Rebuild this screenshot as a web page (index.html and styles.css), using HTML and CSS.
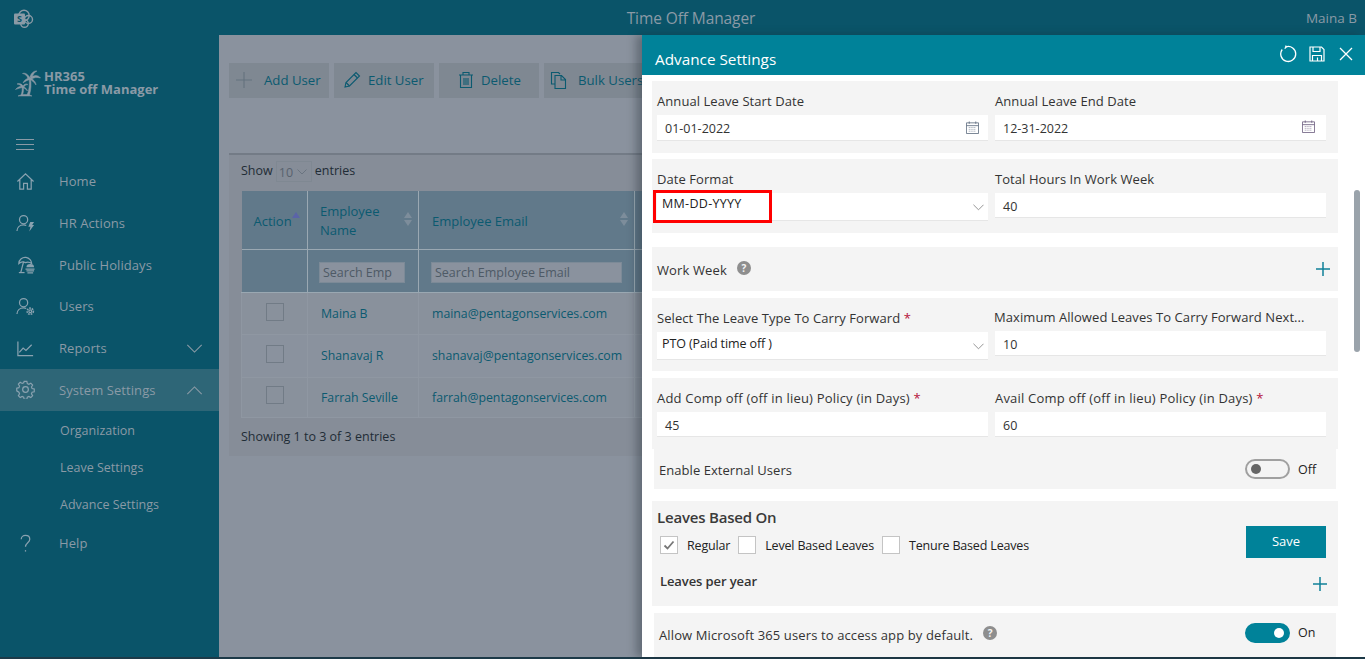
FILE: index.html
```html
<!DOCTYPE html>
<html lang="en">
<head>
<meta charset="utf-8">
<title>Time Off Manager</title>
<link rel="stylesheet" href="styles.css">
</head>
<body>
<header class="topbar">
  <svg class="sp-logo" viewBox="0 0 20 20" width="20" height="20"><circle cx="10" cy="6.500" r="5.200" fill="none" stroke="#8a9aa6" stroke-width="1.400"/><circle cx="14.500" cy="10.500" r="4" fill="none" stroke="#8a9aa6" stroke-width="1.400"/><circle cx="10.500" cy="14.500" r="3.800" fill="none" stroke="#8a9aa6" stroke-width="1.400"/><rect x="0" y="4.500" width="11" height="11" rx="1" fill="#8a9aa6"/><text x="5.500" y="13.200" class="sp-s">S</text></svg>
  <div class="top-title">Time Off Manager</div>
  <div class="top-user">Maina B</div>
</header>
<div class="app">
  <aside class="sidebar">
    <div class="brand">
      <svg class="palm" viewBox="0 0 26 28" width="26" height="28"><g fill="#8a9aa6" stroke="#8a9aa6" stroke-width=".5"><path d="M14 9C15 15 14 22 12 26L14.500 26C16 21 16.500 15 15.500 9Z"/><path d="M15 9C13 5 10 3.500 7.500 4.500 10 4.800 12 6.500 13 9.500Z"/><path d="M15 8C16 4 19 1.500 22 2 19.500 3 18 5.500 17 8Z"/><path d="M15 9C19 5.500 23.500 6 25.500 9 22 8 19 8.500 16.500 10Z"/><path d="M15 9C18 10 21 13 21 16 19 13 17 11.500 15 10.500Z"/><path d="M15 9C12 9 9 11 8 14 10.500 12 13 11 15 10.500Z"/><path d="M7 17.500C7.500 20 7 24 6 26L7.500 26C8.500 23.500 8.800 20 8.200 17.500Z"/><path d="M8 17C6.500 14.500 4 14 2 15 4.500 15.300 6 16.500 7 18Z"/><path d="M8 17C9 15 11.500 14.300 13 15.500 11 15.700 9.500 16.800 8.500 18Z"/><path d="M7.500 17C5 17 2 18.500 0.500 20.500 3 19.500 5.500 18.800 7.500 18.500Z"/><path d="M8 17.500C10 18 12 20 12.500 22 11 20.300 9.500 19 7.500 18.500Z"/><path d="M3 27C7 25 13 25 17 27Z"/></g></svg>
      <div class="brand-text"><div>HR365</div><div>Time off Manager</div></div>
    </div>
    <div class="burger"><span></span><span></span><span></span></div>
    <nav class="nav">
      <a class="nav-item"><svg class="nav-ic" viewBox="0 0 20 20"><path d="M1.500 10 10 2l8.500 8M4 8v10h4v-6h4v6h4V8"/></svg><span>Home</span></a>
      <a class="nav-item"><svg class="nav-ic" viewBox="0 0 20 20"><circle cx="8" cy="6" r="4.300"/><path d="M1 18c0-4 3-6.500 7-6.500 1.200 0 2 .2 2.800.6"/><path class="fillic" d="M15 8.500h4l-2 3h2l-5 7 1.200-5H13Z"/></svg><span>HR Actions</span></a>
      <a class="nav-item"><svg class="nav-ic" viewBox="0 0 20 20"><path d="M3 9C3 4.500 7 2 10.500 2.500 14 3 16.500 6 16.500 9 14 7 12 7 10 8 8 7 5 7 3 9Z"/><path d="M8 7 5 18.500"/><path d="M3 18.500h6"/><path class="fillic" d="M11 13a4 3.500 0 0 1 8 0Z"/><path d="M10 14.800h9.500M11 16.800h8M12 18.800h6"/></svg><span>Public Holidays</span></a>
      <a class="nav-item"><svg class="nav-ic" viewBox="0 0 20 20"><circle cx="8" cy="6" r="4.300"/><path d="M1 18c0-4 3-6.500 7-6.500 1.200 0 2 .2 2.800.6"/><circle cx="15" cy="15" r="1.500"/><circle cx="15" cy="15" r="3.300" stroke-dasharray="1.800 1" stroke-width="1.600"/></svg><span>Users</span></a>
      <a class="nav-item has-caret"><svg class="nav-ic" viewBox="0 0 20 20"><path d="M2 2.500v15h16"/><path d="M3.500 14 7.500 9.500l3 2.500 6-6"/></svg><span>Reports</span><svg class="caret" viewBox="0 0 18 10"><path d="M1 1l8 8 8-8"/></svg></a>
      <a class="nav-item has-caret active"><svg class="nav-ic" viewBox="0 0 20 20"><circle cx="10" cy="10" r="3"/><path d="M8.500 1h3l.5 2.500 1.700.8 2.200-1.300 2 2.100-1.300 2.200.7 1.700 2.400.5v3l-2.400.5-.7 1.700 1.300 2.200-2 2.100-2.200-1.300-1.700.8-.5 2.400h-3l-.5-2.400-1.700-.8-2.200 1.300-2-2.100 1.300-2.200-.7-1.700L.3 11.500v-3l2.400-.5.7-1.700L2.100 4.100l2-2.100 2.200 1.300 1.700-.8Z" transform="translate(.5 .5) scale(.95)"/></svg><span>System Settings</span><svg class="caret" viewBox="0 0 18 10"><path d="M1 9l8-8 8 8"/></svg></a>
      <div class="subnav">
        <a class="sub-item">Organization</a>
        <a class="sub-item">Leave Settings</a>
        <a class="sub-item">Advance Settings</a>
      </div>
      <a class="nav-item"><svg class="nav-ic" viewBox="0 0 20 20"><path d="M5.500 5.500C5.500 3 7.500 1.500 10 1.500s4.500 1.600 4.500 4c0 3.500-4.500 4-4.500 8"/><path d="M10 17v1.500"/></svg><span>Help</span></a>
    </nav>
  </aside>
  <main class="main">
    <div class="toolbar">
      <button class="tool tool-add"><svg class="tool-ic" viewBox="0 0 18 18"><path d="M9 1v16M1 9h16"/></svg><span>Add User</span></button>
      <button class="tool tool-edit"><svg class="tool-ic" viewBox="0 0 18 18"><path d="M2 16l1-4.500L13 1.500l3.500 3.500L6.500 15Z"/><path d="M11 3.500 14.500 7M3 11.500 6.500 15"/></svg><span>Edit User</span></button>
      <button class="tool tool-del"><svg class="tool-ic" viewBox="0 0 18 18"><path d="M2 4h14M6 4V1.500h6V4M3.500 4v12.500h11V4M7 7v7M9 7v7M11 7v7"/></svg><span>Delete</span></button>
      <button class="tool tool-bulk"><svg class="tool-ic" viewBox="0 0 18 18"><path d="M5 13H1.500V1.500h7L10 3"/><path d="M5 4.500h6.500l4 4v9H5ZM11 4.500V9h4.500"/></svg><span>Bulk Users</span></button>
    </div>
    <section class="card">
      <div class="show-line">Show <span class="len-select">10<svg viewBox="0 0 10 6" width="10" height="6"><path d="M.5.500 5 5 9.500.5"/></svg></span> entries</div>
      <table class="grid">
        <thead>
          <tr class="head-row">
            <th class="c-action">Action<i class="sort-up"></i></th>
            <th class="c-name"><span class="th-two">Employee Name</span><i class="sort"></i></th>
            <th class="c-email">Employee Email<i class="sort"></i></th>
            <th class="c-rest"></th>
          </tr>
          <tr class="filter-row">
            <th></th>
            <th><span class="search s-name">Search Emp</span></th>
            <th><span class="search s-email">Search Employee Email</span></th>
            <th></th>
          </tr>
        </thead>
        <tbody>
          <tr class="r1"><td class="cb-cell"><span class="cb"></span></td><td>Maina B</td><td>maina@pentagonservices.com</td><td></td></tr>
          <tr class="r2"><td class="cb-cell"><span class="cb"></span></td><td>Shanavaj R</td><td>shanavaj@pentagonservices.com</td><td></td></tr>
          <tr class="r3"><td class="cb-cell"><span class="cb"></span></td><td>Farrah Seville</td><td>farrah@pentagonservices.com</td><td></td></tr>
        </tbody>
      </table>
      <div class="info">Showing 1 to 3 of 3 entries</div>
    </section>
  </main>
</div>
<div class="bottom-line"></div>

<aside class="panel">
  <div class="panel-head">
    <div class="panel-title">Advance Settings</div>
    <svg class="ph-ic ph-reset" viewBox="0 0 18 18"><path d="M7 1.800A7.500 7.500 0 1 1 3.200 4.500"/><path d="M6.500 .6 7.200 2 5.700 3.600"/></svg>
    <svg class="ph-ic ph-save" viewBox="0 0 18 18"><path d="M2 2h11.500L16 4.500V16H2Z"/><path d="M5 2v4.500h7V2M4.500 16v-5.500h9V16M9.500 12.500V16"/></svg>
    <svg class="ph-ic ph-close" viewBox="0 0 18 18"><path d="M3 3l12 12M15 3 3 15"/></svg>
  </div>
  <div class="panel-body">
    <div class="frow r-dates">
      <div class="fld"><label>Annual Leave Start Date</label><div class="inp tall">01-01-2022<svg class="cal" viewBox="0 0 14 14"><path d="M.5 2h13v11.500H.5ZM.5 5h13M3.500.5V3M10.500.5V3"/><path class="cal-dots" d="M3 7h8M3 9h8M3 11h8"/></svg></div></div>
      <div class="fld"><label>Annual Leave End Date</label><div class="inp tall">12-31-2022<svg class="cal cal-b" viewBox="0 0 14 14"><path d="M.5 2h13v11.500H.5ZM.5 5h13M3.500.5V3M10.500.5V3"/><path class="cal-dots" d="M3 7h8M3 9h8M3 11h8"/></svg></div></div>
    </div>
    <div class="frow r-format">
      <div class="fld"><label>Date Format</label><div class="sel sel-high"><span class="sel-txt sel-date">MM-DD-YYYY</span><svg class="chev" viewBox="0 0 12 7"><path d="M.5.500 6 6 11.500.5"/></svg><span class="redbox"></span></div></div>
      <div class="fld"><label>Total Hours In Work Week</label><div class="inp">40</div></div>
    </div>
    <div class="frow-line r-week">
      <span class="plain-label">Work Week</span><span class="help-dot">?</span>
      <svg class="plus" viewBox="0 0 14 14"><path d="M7 0v14M0 7h14"/></svg>
    </div>
    <div class="frow r-carry">
      <div class="fld"><label>Select The Leave Type To Carry Forward <b>*</b></label><div class="sel"><span class="sel-txt">PTO (Paid time off )</span><svg class="chev" viewBox="0 0 12 7"><path d="M.5.500 6 6 11.500.5"/></svg></div></div>
      <div class="fld fld-up"><label>Maximum Allowed Leaves To Carry Forward Next...</label><div class="inp">10</div></div>
    </div>
    <div class="frow r-comp">
      <div class="fld"><label>Add Comp off (off in lieu) Policy (in Days) <b>*</b></label><div class="inp">45</div></div>
      <div class="fld"><label>Avail Comp off (off in lieu) Policy (in Days) <b>*</b></label><div class="inp">60</div></div>
    </div>
    <div class="tog-row r-ext">
      <span class="plain-label">Enable External Users</span>
      <span class="toggle"></span><span class="tog-txt">Off</span>
    </div>
    <div class="leaves">
      <div class="leaves-top">
        <div class="leaves-left">
          <div class="leaves-title">Leaves Based On</div>
          <div class="checks">
            <span class="chk"><svg viewBox="0 0 12 10" width="12" height="10"><path d="M1.500 5.500 4.500 8.500 10.500 1.500"/></svg></span><span class="chk-l">Regular</span>
            <span class="chk"></span><span class="chk-l">Level Based Leaves</span>
            <span class="chk"></span><span class="chk-l">Tenure Based Leaves</span>
          </div>
        </div>
        <button class="save">Save</button>
      </div>
      <div class="lpy"><span>Leaves per year</span><svg class="plus" viewBox="0 0 14 14"><path d="M7 0v14M0 7h14"/></svg></div>
    </div>
    <div class="tog-row r-allow">
      <span class="plain-label allow-label">Allow Microsoft 365 users to access app by default.</span><span class="help-dot">?</span>
      <span class="toggle on"></span><span class="tog-txt">On</span>
    </div>
  </div>
  <div class="thumb"></div>
</aside>
</body>
</html>
```
FILE: styles.css
```css
* { box-sizing: border-box; }
html, body { margin: 0; height: 100%; overflow: hidden; }
body {
  width: 1365px; height: 659px; position: relative;
  font-family: "Open Sans", "Noto Sans", "Liberation Sans", sans-serif;
  font-size: 13px; background: #8a929e; color: #333;
  display: flex; flex-direction: column;
}
svg { display: block; flex: none; }

.topbar {
  height: 35px; flex: none; background: #0a5469; color: #8a9aa6;
  display: flex; align-items: center; padding: 0 8px 0 14px;
}
.sp-logo { margin-top: 3px; }
.sp-s { font: 700 9px "Open Sans", sans-serif; fill: #0a5469; text-anchor: middle; }
.top-title { flex: 1; text-align: center; font-size: 15.500px; padding-left: 42px; letter-spacing: -.1px; }
.top-user { font-size: 13.500px; }

.app { flex: 1; display: flex; min-height: 0; }
.sidebar { width: 219px; flex: none; background: #0a5469; color: #8a9aa6; }
.brand { height: 61px; margin-top: 34px; display: flex; align-items: flex-start; padding-left: 15px; }
.brand-text { font-weight: 700; font-size: 13px; line-height: 13px; margin-left: 3px; padding-top: 1px; }
.burger { height: 13px; margin: 8px 0 0 16px; width: 18px; display: flex; flex-direction: column; justify-content: space-between; padding: 1px 0; }
.burger span { height: 1px; background: #8a9aa6; display: block; }
.nav { margin-top: 9.500px; }
.nav-item { height: 41.700px; display: flex; align-items: center; padding-left: 16px; font-size: 13px; position: relative; letter-spacing: .08px; }
.nav-item span { margin-left: 24px; }
.nav-ic { width: 19px; height: 19px; fill: none; stroke: #8aa2b0; stroke-width: 1.300; }
.nav-ic .fillic { fill: #8aa2b0; stroke: none; }
.has-caret .caret { position: absolute; left: 186px; top: 17px; width: 17px; height: 9px; fill: none; stroke: #8a9aa6; stroke-width: 1.200; }
.active { background: #2e6677; }
.subnav { display: flex; flex-direction: column; padding: 1px 0 0 60px; }
.sub-item { height: 37px; display: flex; align-items: center; font-size: 12.500px; }

.main { flex: 1; min-width: 0; padding: 28px 0 0 10px; overflow: hidden; }
.toolbar { display: flex; gap: 5px; height: 35px; }
.tool {
  width: 100px; flex: none; height: 35px; border: 0; background: #7f8892; color: #0b5a70;
  display: flex; align-items: center; font: inherit; font-size: 13.200px; padding: 0 0 2px 6px;
}
.tool span { margin-left: 11px; white-space: nowrap; }
.tool-ic { width: 18px; height: 18px; fill: none; stroke: #0b5a70; stroke-width: 1.100; }
.tool-add .tool-ic { stroke: #64727e; }
.tool-edit { padding-left: 9px; }
.tool-edit span { margin-left: 7px; }
.tool-del { padding-left: 18px; }
.tool-del span { margin-left: 6px; }
.tool-bulk span { margin-left: 10px; }
.card {
  margin-top: 55px; height: 303px; background: #868d98;
  border-top: 2px solid #737b86; padding: 0 0 0 12px; width: 800px; color: #20303a;
}
.show-line { height: 36px; display: flex; align-items: center; font-size: 12.500px; padding-bottom: 6px; color: #1f2c36; }
.len-select {
  width: 36px; height: 21px; border: 1px solid #7f8892; margin: 2px 3px 0 3px; color: #59636f;
  display: flex; align-items: center; justify-content: space-between; padding: 2px 4px 0 2px;
}
.len-select svg { fill: none; stroke: #6a7480; }
.grid { border-collapse: collapse; table-layout: fixed; width: 559px; color: #0b5a70; }
.grid th { font-weight: 400; text-align: left; border: 1px solid #9aa8b2; background: #61798a; padding: 0; position: relative; border-top: 0; }
.grid th:first-child { border-left: 0; }
.head-row th { height: 58px; padding: 2px 0 0 12px; }
.head-row .c-email { padding-left: 13px; }
.filter-row th { height: 43px; padding: 3px 0 0 12px; }
.filter-row th:nth-child(2) { padding-left: 11px; }
.c-action { width: 66px; }
.c-name { width: 111px; }
.c-email { width: 216px; }
.th-two { display: block; width: 70px; line-height: 19px; }
.sort, .sort-up { position: absolute; }
.sort { right: 6px; top: 21px; width: 0; height: 0; border-left: 4px solid transparent; border-right: 4px solid transparent; border-bottom: 6px solid #7d8d9b; }
.sort::after { content: ""; position: absolute; left: -4px; top: 8px; border-left: 4px solid transparent; border-right: 4px solid transparent; border-top: 6px solid #7d8d9b; }
.sort-up { top: 21px; border-left: 4px solid transparent; border-right: 4px solid transparent; border-bottom: 6px solid #5b64a8; }
.search { display: block; height: 21px; background: #8a929e; border: 1px solid #7c8a97; color: #4e5a66; font-size: 12.500px; line-height: 19px; padding-left: 3px; white-space: nowrap; overflow: hidden; }
.s-name { width: 86px; }
.s-email { width: 191px; }
.grid td { border: 1px solid #8f97a2; padding: 0 0 0 13px; font-size: 12.300px; white-space: nowrap; background: #89919c; }
.r1 td { height: 42px; }
.r2 td { height: 43px; background: #8a929e; }
.r3 td { height: 40px; }
.grid td.cb-cell { padding-left: 24px; }
.cb { display: block; width: 18px; height: 18px; border: 1px solid #717b86; margin-bottom: 2px; }
.r2 .cb, .r3 .cb { margin-bottom: 4px; }
.info { margin-top: 10px; font-size: 12.500px; color: #1f2c36; }

.bottom-line { height: 2px; flex: none; background: #1d3a48; }

.panel {
  position: absolute; left: 642px; top: 35px; width: 723px; height: 622px; background: #fff;
  box-shadow: -6px 0 8px rgba(30, 40, 50, .35); overflow: hidden;
}
.panel-head { height: 40px; background: #008299; color: #fff; display: flex; align-items: center; padding: 0 10px 0 13px; }
.panel-title { font-size: 15.300px; flex: 1; padding-top: 7px; }
.ph-ic { width: 18px; height: 18px; fill: none; stroke: #fff; stroke-width: 1.300; margin-top: -3px; }
.ph-reset { margin-right: 11px; }
.ph-save { margin-right: 11px; stroke-width: 1.200; }

.panel-body { padding: 6px 27px 0 10px; display: flex; flex-direction: column; }
.frow { background: #f4f4f4; display: grid; grid-template-columns: 331px 331px; column-gap: 7px; padding: 11px 12px 0 5px; }
.fld { min-width: 0; }
.fld label { display: block; height: 23px; line-height: 19px; font-size: 13px; white-space: nowrap; letter-spacing: .07px; color: #333; }
.r-comp .fld label { letter-spacing: .2px; }
.fld b { color: #b5123a; font-weight: 400; }
.inp, .sel { background: #fff; height: 25px; border-bottom: 1px solid #e6e6e6; position: relative; display: flex; align-items: center; font-size: 12.500px; padding: 2px 0 0 8px; color: #333; }
.inp.tall { height: 26px; }
.sel { height: 28px; padding: 0 0 0 5px; }
.sel-txt { color: #222; margin-top: -4px; letter-spacing: -.1px; }
.sel-date { margin-top: -6px; letter-spacing: .3px; }
.chev { position: absolute; right: 4px; top: 11px; width: 11px; height: 7px; fill: none; stroke: #8b8b8b; }
.cal { position: absolute; right: 9px; top: 6px; width: 13px; height: 13px; fill: none; stroke: #5e6c80; stroke-width: .9; }
.cal-b { stroke: #6c5e80; right: 11px; top: 5px; }
.cal-dots { stroke-dasharray: 1 1; stroke-width: .7; }
.redbox { position: absolute; left: -4px; top: -3px; width: 119px; height: 33px; border: 3px solid #f00; pointer-events: none; }
.r-dates { height: 72px; margin-bottom: 6px; }
.r-format { height: 74px; margin-bottom: 14px; }
.frow-line { height: 44px; background: #f4f4f4; display: flex; align-items: center; padding: 2px 8px 0 5px; margin-bottom: 7px; }
.plain-label { font-size: 13px; letter-spacing: .12px; color: #333; white-space: nowrap; }
.r-ext .plain-label { letter-spacing: .05px; padding-top: 2px; }
.help-dot { width: 14px; height: 14px; border-radius: 50%; background: #8e8e8e; color: #f4f4f4; font-size: 10px; font-weight: 700; display: flex; align-items: center; justify-content: center; margin: -5px 0 0 10px; }
.frow-line .plus { margin-left: auto; margin-top: -3px; }
.plus { width: 14px; height: 14px; fill: none; stroke: #0f8098; stroke-width: 1.500; }
.r-carry { height: 73px; margin-bottom: 7px; }
.fld-up label { margin: -1px 0 0 -1px; }
.r-comp { height: 71px; }
.tog-row { background: #f4f4f4; margin: 0 2px; display: flex; align-items: center; padding: 0 34px 0 5px; position: relative; }
.r-ext { height: 40px; margin-bottom: 12px; }
.r-allow { height: 44px; margin-top: 7px; }
.toggle { margin-left: auto; width: 45px; height: 20px; border-radius: 10px; border: 2px solid #a0a0a0; position: relative; background: #f4f4f4; }
.r-allow .toggle { margin-top: -5px; }
.toggle::after { content: ""; position: absolute; left: 4px; top: 3px; width: 10px; height: 10px; border-radius: 50%; background: #666; }
.toggle.on { background: #008299; border-color: #008299; }
.toggle.on::after { left: auto; right: 4px; background: #fff; }
.tog-txt { margin-left: 8px; width: 16px; font-size: 12.500px; color: #222; margin-right: -12px; }
.r-allow .tog-txt { margin-top: -5px; }
.leaves { background: #f4f4f4; height: 105px; padding: 0 12px 0 5px; }
.leaves-top { display: flex; justify-content: space-between; height: 69px; }
.leaves-title { font-size: 15px; font-weight: 600; color: #3a3a3a; padding-top: 6px; line-height: 21px; letter-spacing: -.2px; }
.checks { display: flex; align-items: center; margin: 8px 0 0 3px; font-size: 12.500px; color: #222; }
.chk { width: 18px; height: 18px; background: #fff; border: 1px solid #c4c4c4; display: flex; align-items: center; justify-content: center; margin-right: 9px; }
.chk svg { fill: none; stroke: #777; stroke-width: 1.800; }
.chk-l { margin-right: 8px; letter-spacing: -.17px; }
.save { margin-top: 25px; width: 80px; height: 32px; background: #008299; color: #fff; border: 0; font: inherit; font-size: 13px; padding: 0 0 3px; }
.lpy { display: flex; justify-content: space-between; align-items: center; padding-left: 3px; font-size: 13px; font-weight: 600; color: #333; height: 22px; letter-spacing: -.1px; }
.lpy .plus { margin: 5px -1px 0 0; }

.thumb { position: absolute; right: 5px; top: 155px; width: 6px; height: 162px; border-radius: 3px; background: #9aa3ab; }
```
